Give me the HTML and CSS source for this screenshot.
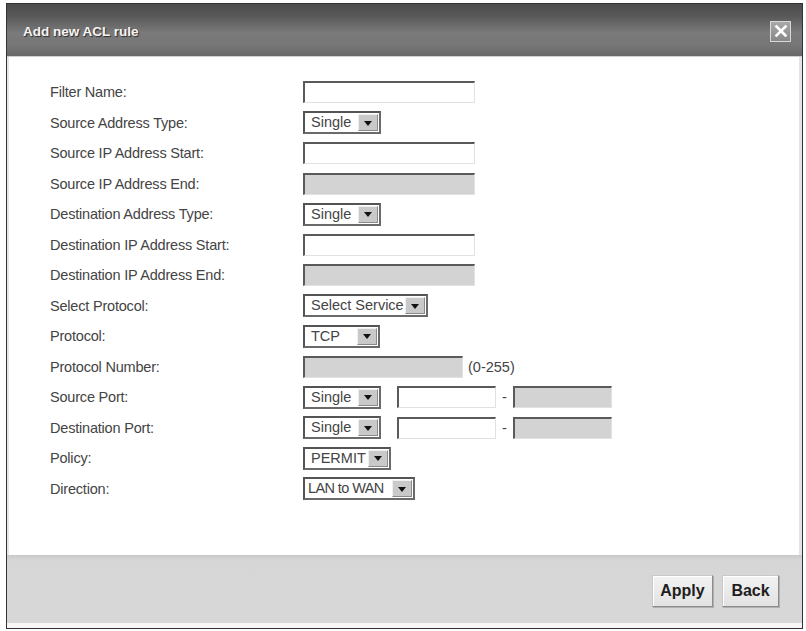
FILE: index.html
```html
<!DOCTYPE html>
<html lang="en">
<head>
<meta charset="utf-8">
<title>Add new ACL rule</title>
<link rel="stylesheet" href="styles.css">
</head>
<body>
<div class="dialog">
  <div class="titlebar">
    <span class="title">Add new ACL rule</span>
    <span class="close" aria-label="Close">
      <svg width="14" height="14" viewBox="0 0 14 14"><path d="M2.5 2.5 L11.5 11.5 M11.5 2.5 L2.5 11.5" stroke="#fff" stroke-width="2.6" stroke-linecap="square"/></svg>
    </span>
  </div>

  <form class="body">
    <div class="row"><span class="label">Filter Name:</span><span class="ctl"><span class="txt"></span></span></div>
    <div class="row"><span class="label">Source Address Type:</span><span class="ctl"><span class="sel w-single"><span class="val">Single</span><span class="arrow"></span></span></span></div>
    <div class="row"><span class="label">Source IP Address Start:</span><span class="ctl"><span class="txt"></span></span></div>
    <div class="row"><span class="label">Source IP Address End:</span><span class="ctl"><span class="txt off"></span></span></div>
    <div class="row"><span class="label">Destination Address Type:</span><span class="ctl"><span class="sel w-single"><span class="val">Single</span><span class="arrow"></span></span></span></div>
    <div class="row"><span class="label">Destination IP Address Start:</span><span class="ctl"><span class="txt"></span></span></div>
    <div class="row"><span class="label">Destination IP Address End:</span><span class="ctl"><span class="txt off"></span></span></div>
    <div class="row"><span class="label">Select Protocol:</span><span class="ctl"><span class="sel w-service"><span class="val">Select Service</span><span class="arrow"></span></span></span></div>
    <div class="row"><span class="label">Protocol:</span><span class="ctl"><span class="sel w-tcp"><span class="val">TCP</span><span class="arrow"></span></span></span></div>
    <div class="row"><span class="label">Protocol Number:</span><span class="ctl"><span class="txt off num"></span><span class="hint">(0-255)</span></span></div>
    <div class="row"><span class="label">Source Port:</span><span class="ctl"><span class="sel w-single"><span class="val">Single</span><span class="arrow"></span></span><span class="txt port"></span><span class="dash">-</span><span class="txt port off"></span></span></div>
    <div class="row"><span class="label">Destination Port:</span><span class="ctl"><span class="sel w-single"><span class="val">Single</span><span class="arrow"></span></span><span class="txt port"></span><span class="dash">-</span><span class="txt port off"></span></span></div>
    <div class="row"><span class="label">Policy:</span><span class="ctl"><span class="sel w-permit"><span class="val">PERMIT</span><span class="arrow"></span></span></span></div>
    <div class="row"><span class="label">Direction:</span><span class="ctl"><span class="sel w-dir"><span class="val tight">LAN to WAN</span><span class="arrow"></span></span></span></div>
  </form>

  <div class="footer">
    <span class="btn apply">Apply</span>
    <span class="btn back">Back</span>
  </div>
</div>
</body>
</html>
```

FILE: styles.css
```css
html, body {
  margin: 0;
  padding: 0;
  background: #fff;
}

body {
  font-family: "Liberation Sans", Arial, sans-serif;
  color: #444;
  width: 806px;
  height: 631px;
  overflow: hidden;
}

/* dialog frame */
.dialog {
  box-sizing: border-box;
  margin: 3px 3px 0 6px;
  height: 626px;
  border: 1px solid #333;
  box-shadow: inset -3px 0 0 #e4e4e4;
  display: flex;
  flex-direction: column;
  background: #fff;
}

/* header bar */
.titlebar {
  height: 52px;
  flex: none;
  display: flex;
  align-items: center;
  justify-content: space-between;
  padding: 0 11px 0 16px;
  background: linear-gradient(#4c4c4c 0%, #5a5a5a 25%, #7a7a7a 55%, #767676 80%, #686868 100%);
  border-bottom: 1px solid #cfcfcf;
}

.title {
  color: #f4f4f4;
  font-weight: bold;
  font-size: 13.5px;
  margin-top: 3px;
  text-shadow: 1px 1px 1px #2a2a2a;
}

.close {
  box-sizing: border-box;
  width: 21px;
  height: 21px;
  margin-top: 2px;
  border: 1px solid #d8d8d8;
  background: linear-gradient(#a8a8a8, #888);
  display: flex;
  align-items: center;
  justify-content: center;
}

/* form body */
.body {
  flex: 1;
  margin: 0;
  padding: 20px 0 0 41px;
  border-left: 2px solid #e6e6e6;
}

.row {
  height: 30.5px;
  display: flex;
  align-items: center;
  font-size: 14.5px;
}

.label {
  width: 253px;
  flex: none;
  letter-spacing: -0.2px;
}

.ctl {
  display: flex;
  align-items: center;
}

/* text boxes */
.txt {
  box-sizing: border-box;
  display: inline-block;
  width: 172px;
  height: 22px;
  border-top: 2px solid #5a5a5a;
  border-left: 2px solid #5a5a5a;
  border-right: 1px solid #e2e2e2;
  border-bottom: 1px solid #e2e2e2;
  background: #fff;
}

.txt.off {
  background: #d3d3d3;
}

.txt.num {
  width: 160px;
}

.txt.port {
  width: 99px;
  margin-left: 16px;
}

.dash {
  width: 17px;
  text-align: center;
}

.dash + .txt.port {
  margin-left: 0;
}

.hint {
  margin-left: 5px;
}

/* drop-down boxes */
.sel {
  box-sizing: border-box;
  height: 23px;
  display: inline-flex;
  align-items: stretch;
  border: 2px solid;
  border-color: #545454 #6a6a6a #6a6a6a #545454;
  background: #fff;
}

.sel .val {
  flex: 1;
  padding-left: 6px;
  line-height: 19px;
  white-space: nowrap;
  overflow: hidden;
}

.sel .val.tight {
  letter-spacing: -0.6px;
  padding-left: 3px;
}

.sel .arrow {
  width: 18px;
  flex: none;
  margin: 1px;
  background: #c9c9c9;
  border-left: 1px solid #f0f0f0;
  border-top: 1px solid #f0f0f0;
  border-right: 1px solid #8a8a8a;
  border-bottom: 1px solid #8a8a8a;
  position: relative;
}

.sel .arrow::after {
  content: "";
  position: absolute;
  left: 50%;
  top: 50%;
  margin: -2px 0 0 -4px;
  border-left: 4px solid transparent;
  border-right: 4px solid transparent;
  border-top: 5px solid #111;
}

.w-single { width: 78px; }
.w-service { width: 125px; }
.w-tcp { width: 77px; }
.w-permit { width: 88px; }
.w-dir { width: 112px; }

/* button strip */
.footer {
  height: 73px;
  flex: none;
  box-sizing: border-box;
  display: flex;
  justify-content: flex-end;
  align-items: flex-start;
  gap: 9px;
  padding: 20px 23px 0 0;
  background: linear-gradient(#c9c9c9 0, #d6d6d6 5px, #d7d7d7 100%);
  border-bottom: 5px solid #f6f6f6;
}

.btn {
  box-sizing: border-box;
  height: 32px;
  display: inline-flex;
  align-items: center;
  justify-content: center;
  font-weight: bold;
  font-size: 16px;
  color: #1e1e1e;
  background: linear-gradient(#f2f2f2, #e2e2e2);
  border: 1px solid;
  border-color: #c8c8c8 #8c8c8c #8c8c8c #c8c8c8;
  box-shadow: 1px 1px 0 #b0b0b0, inset 1px 1px 0 #fff;
}

.apply { width: 61px; }
.back { width: 57px; }
```
